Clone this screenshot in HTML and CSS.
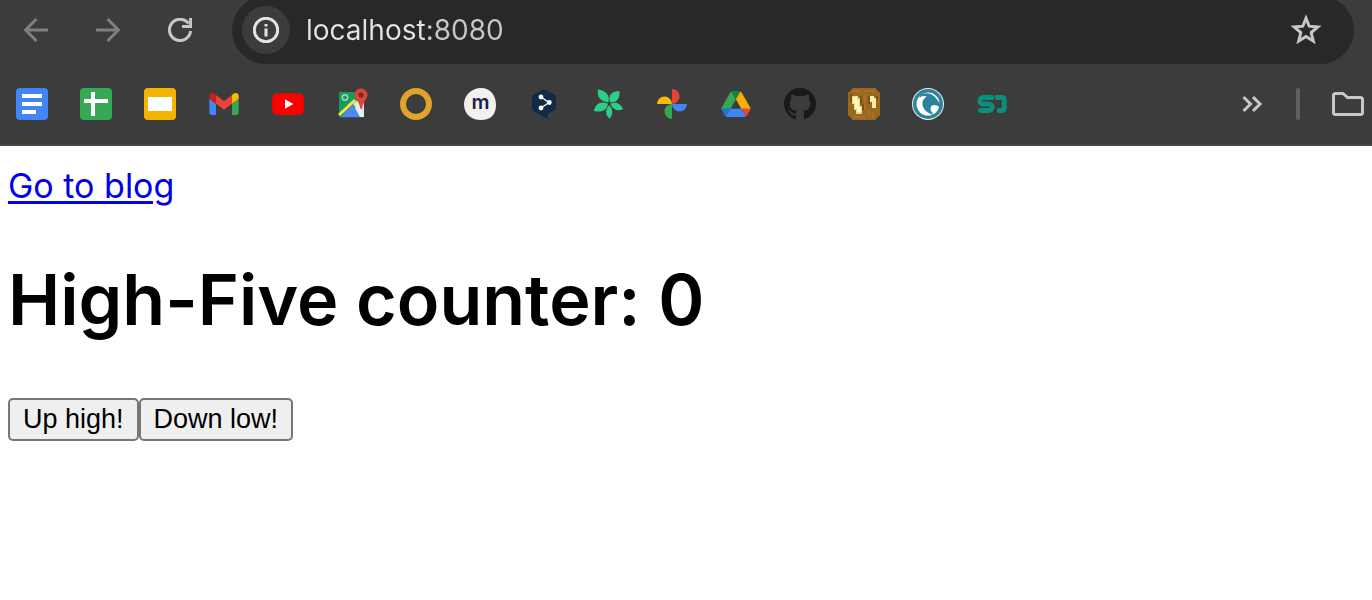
FILE: index.html
```html
<!DOCTYPE html>
<html lang="en">
  <head>
    <meta charset="UTF-8" />
    <meta name="viewport" content="width=device-width, initial-scale=1.0" />
    <title>High-Five counter</title>
    <link rel="stylesheet" href="styles.css">
  </head>
  <body>
    <header class="browser">
      <!-- Navigation and address bar -->
      <div class="toolbar">
        <button class="nav-btn" type="button" aria-label="Back" disabled>
          <svg viewBox="0 0 24 24"><path d="M24 12H2M12.500 1L1.500 12L12.500 23" /></svg>
        </button>
        <button class="nav-btn" type="button" aria-label="Forward" disabled>
          <svg viewBox="0 0 24 24"><path d="M0 12H22M11.500 1L22.500 12L11.500 23" /></svg>
        </button>
        <button class="nav-btn active" type="button" aria-label="Reload">
          <svg viewBox="0 0 24 24">
            <path d="M20.500 5.500A10.600 10.600 0 1 0 22.600 13M22.600 0V8.600H14" />
          </svg>
        </button>
        <form class="address-bar">
          <button class="info-btn" type="button" aria-label="Site information">
            <svg viewBox="0 0 26 26">
              <circle cx="13" cy="13" r="11.700" />
              <path d="M13 11.500V19.500M13 7V9.600" />
            </svg>
          </button>
          <input class="url" type="text" aria-label="Address" value="localhost:8080" />
          <button class="star-btn" type="button" aria-label="Bookmark this page">
            <svg viewBox="0 0 32 32">
              <path d="M16 4.200L19.200 12.200L27.800 12.900L21.200 18.500L23.300 27L16 22.400L8.700 27L10.800 18.500L4.200 12.900L12.800 12.200Z" />
            </svg>
          </button>
        </form>
      </div>

      <!-- Bookmarks -->
      <nav class="bookmarks">
        <a href="#" aria-label="Docs">
          <svg viewBox="0 0 32 32">
            <rect width="32" height="32" rx="4" fill="#4285f4" />
            <path d="M6 6h20v4H6zM6 14h20v4H6zM6 22h14v4H6z" fill="#fff" />
          </svg>
        </a>
        <a href="#" aria-label="Sheets">
          <svg viewBox="0 0 32 32">
            <rect width="32" height="32" rx="4" fill="#34a853" />
            <path d="M11 4h4v24h-4zM4 11h24v4H4z" fill="#fff" />
          </svg>
        </a>
        <a href="#" aria-label="Slides">
          <svg viewBox="0 0 32 32">
            <rect width="32" height="32" rx="4" fill="#f5b400" />
            <path d="M4 9h24v14H4z" fill="#fff" />
          </svg>
        </a>
        <a href="#" aria-label="Gmail">
          <svg viewBox="48 27 96 96">
            <path fill="#4285f4" d="M58 108h14V74L52 59v43c0 3.320 2.690 6 6 6" />
            <path fill="#34a853" d="M120 108h14c3.320 0 6-2.690 6-6V59l-20 15" />
            <path fill="#fbbc04" d="M120 48v26l20-15v-8c0-7.420-8.470-11.650-14.400-7.200" />
            <path fill="#ea4335" d="M72 74V48l24 18 24-18v26L96 92" />
            <path fill="#c5221f" d="M52 51v8l20 15V48l-5.600-4.200c-5.940-4.450-14.400-.220-14.400 7.200" />
          </svg>
        </a>
        <a href="#" aria-label="YouTube">
          <svg viewBox="0 0 32 32">
            <path fill="#f00" d="M5 5.400Q16 4.600 27 5.400Q31 5.700 31.500 9.500Q32.400 16 31.500 22.500Q31 26.300 27 26.700Q16 27.500 5 26.700Q1 26.300.500 22.500Q-.400 16 .500 9.500Q1 5.700 5 5.400Z" />
            <path fill="#fff" d="M13 11.200L21.400 16L13 20.800Z" />
          </svg>
        </a>
        <a href="#" aria-label="Maps">
          <svg viewBox="0 0 32 32">
            <rect x="3" y="4" width="25" height="25" rx="1" fill="#169b5d" />
            <path d="M17 16L28 6V28L22 23Z" fill="#dfe3e6" />
            <path d="M16 17L27 29H5Z" fill="#4a8af4" />
            <path d="M28 25V29H24L19 20L22 18Z" fill="#e9edf0" />
            <path d="M3 27L19 12" stroke="#ffdf4d" stroke-width="3" />
            <path d="M4 29.500H28" stroke="#40516d" stroke-width="1" />
            <circle cx="9" cy="9.500" r="2.700" fill="none" stroke="#a7dcc0" stroke-width="1.500" />
            <path d="M25 .500A6.500 6.500 0 0 1 31.500 7C31.500 11 27 13 26 21H24.500C23.500 13 18.500 11 18.500 7A6.500 6.500 0 0 1 25 .500Z" fill="#e04438" />
            <circle cx="25" cy="7" r="2.600" fill="#782c25" />
          </svg>
        </a>
        <a href="#" aria-label="Ring">
          <svg viewBox="0 0 32 32">
            <circle cx="16" cy="16" r="13" fill="none" stroke="#e0a32c" stroke-width="6" />
          </svg>
        </a>
        <a href="#" aria-label="Miro">
          <svg viewBox="0 0 32 32">
            <path d="M17 0C26 0 32 7 32 17C32 26 27 32 17 32C7 32 0 26 0 16C0 7 8 0 17 0Z" fill="#f3f1ec" />
            <text class="m-mark" x="16.500" y="21" text-anchor="middle">m</text>
          </svg>
        </a>
        <a href="#" aria-label="DeepL">
          <svg viewBox="0 0 32 32">
            <path d="M16 1L28 7.500V21.500L19.800 26V31L15 28.500L4 22V7.500Z" fill="#0f2b46" />
            <path d="M13 9L21 14.500L13 20" stroke="#fff" stroke-width="1.300" fill="none" />
            <g fill="#fff">
              <circle cx="13" cy="9" r="2.400" />
              <circle cx="21.300" cy="14.500" r="2.400" />
              <circle cx="13" cy="20" r="2.400" />
            </g>
          </svg>
        </a>
        <a href="#" aria-label="Flower">
          <svg viewBox="0 0 32 32">
            <g fill="#2fcb89">
              <path d="M16.500 14.500C8 14 4.500 8 6 1.300C14 3 18 7 16.500 14.500Z" />
              <path d="M18.200 14.500C15.500 7 20 3 27.300 3C28.500 10 25 15 18.200 14.500Z" />
              <path d="M18.500 15.800C24 13 29 16 31 21C25 24 20 21 18.500 15.800Z" />
              <path d="M17.300 17.200C21.500 22 21 27 17.500 30.700C13 27 13 21 17.300 17.200Z" />
              <path d="M16 15.800C15 23 8 25 1.700 22.700C4 15 9 12.500 16 15.800Z" />
            </g>
          </svg>
        </a>
        <a href="#" aria-label="Photos">
          <svg viewBox="0 0 32 32">
            <path fill="#ea4335" d="M16 1A7.500 7.500 0 0 1 16 16Z" />
            <path fill="#4285f4" d="M31 16A7.500 7.500 0 0 1 16 16Z" />
            <path fill="#34a853" d="M16 31A7.500 7.500 0 0 1 16 16Z" />
            <path fill="#fbbc04" d="M1 16A7.500 7.500 0 0 1 16 16Z" />
          </svg>
        </a>
        <a href="#" aria-label="Drive">
          <svg viewBox="-4 -9 96 96">
            <path fill="#1a73e8" d="M6.600 66.850l3.850 6.650c.800 1.400 1.950 2.500 3.300 3.300l13.750-23.800H0c0 1.550.400 3.100 1.200 4.500z" />
            <path fill="#34a853" d="M43.650 25L29.900 1.200c-1.350.800-2.500 1.900-3.300 3.300l-25.400 44A9.060 9.060 0 0 0 0 53h27.500z" />
            <path fill="#ea4335" d="M73.550 76.800c1.350-.800 2.500-1.900 3.300-3.300l9.250-16c.800-1.400 1.200-2.950 1.200-4.500H59.800z" />
            <path fill="#188038" d="M43.650 25L57.400 1.200C56.050.400 54.500 0 52.900 0H34.400c-1.600 0-3.150.450-4.500 1.200z" />
            <path fill="#4285f4" d="M59.800 53H27.500L13.750 76.800c1.350.800 2.900 1.200 4.500 1.200h50.800c1.600 0 3.150-.450 4.500-1.200z" />
            <path fill="#fbad04" d="M73.400 26.500l-12.700-22c-.800-1.400-1.950-2.500-3.300-3.300L43.650 25l16.150 28h27.450c0-1.550-.400-3.100-1.200-4.500z" />
          </svg>
        </a>
        <a href="#" aria-label="GitHub">
          <svg viewBox="0 0 16 16">
            <path fill="#1b1a1b" d="M8 0C3.580 0 0 3.580 0 8c0 3.540 2.290 6.530 5.470 7.590.4.070.55-.17.55-.38 0-.19-.01-.82-.01-1.490-2.010.37-2.530-.49-2.690-.94-.09-.23-.48-.94-.82-1.130-.28-.15-.68-.52-.01-.53.63-.01 1.080.58 1.230.82.72 1.210 1.870.87 2.330.66.07-.52.28-.87.51-1.070-1.780-.2-3.640-.89-3.640-3.950 0-.87.31-1.590.82-2.150-.08-.2-.36-1.020.08-2.120 0 0 .67-.21 2.200.82.64-.18 1.320-.27 2-.27s1.360.09 2 .27c1.530-1.040 2.200-.82 2.200-.82.44 1.100.16 1.920.08 2.120.51.56.82 1.270.82 2.150 0 3.070-1.870 3.750-3.650 3.950.29.25.54.73.54 1.480 0 1.070-.01 1.930-.01 2.200 0 .21.15.46.55.38A8.010 8.010 0 0 0 16 8c0-4.420-3.580-8-8-8z" />
          </svg>
        </a>
        <a href="#" aria-label="Wood">
          <svg viewBox="0 0 32 32" shape-rendering="crispEdges">
            <path d="M4 0H28V2H30V4H32V28H30V30H28V32H4V30H2V28H0V4H2V2H4Z" fill="#9a681f" />
            <path d="M4 2h8v2H4zM16 2h10v2H16zM16 6h2v16h-2zM6 28h12v2H6zM20 22h2v6h-2zM24 24h2v6h-2z" fill="#a87226" />
            <path d="M2 6h2v8H2zM12 8h2v8h-2zM14 16h2v6h-2zM20 8h2v8h-2zM28 8h2v4h-2z" fill="#7d5014" />
            <path d="M4 8H10V10H12V18H14V26H8V22H6V16H4Z" fill="#ead98a" />
            <path d="M5 9H9V12H11V19H13V24H9V21H7V15H5Z" fill="#fffbb8" />
            <path d="M22 8H26V10H28V20H24V14H22Z" fill="#f8efa5" />
          </svg>
        </a>
        <a href="#" aria-label="Bird">
          <svg viewBox="0 0 32 32">
            <circle cx="16" cy="16" r="16" fill="#e4f1f4" />
            <circle cx="16" cy="16" r="15" fill="#2b849b" />
            <circle cx="16" cy="16" r="11.500" fill="#fff" />
            <path d="M8.500 6.500C16 3 23 7 26 13C28 15 29 17 28.500 20C25 16 19 16 18.500 20C18.500 23 20 25.500 23 27C15 26 9.500 20 10.500 14C11 11.500 12.500 10 14.500 8.500C12 7.500 10 8 7 10Z" fill="#2b849b" />
          </svg>
        </a>
        <a href="#" aria-label="Speaker Deck">
          <svg viewBox="0 0 32 32">
            <path d="M16 9.500H7A3.200 3.200 0 0 0 7 16H13A3.200 3.200 0 0 1 13 22.500H4.500" fill="none" stroke="#0b8f7d" stroke-width="4.800" stroke-linecap="round" />
            <path d="M21 9.500H26Q28.200 9.500 28.200 12V20Q28.200 22.500 26 22.500H23" fill="none" stroke="#0b8f7d" stroke-width="4.800" stroke-linecap="round" />
          </svg>
        </a>
        <button class="more-btn" type="button" aria-label="More bookmarks">
          <svg viewBox="0 0 24 24"><path d="M3.500 5L10.500 12L3.500 19M13 5L20 12L13 19" /></svg>
        </button>
        <span class="divider"></span>
        <button class="folder-btn" type="button" aria-label="All bookmarks">
          <svg viewBox="0 0 32 32">
            <path d="M3.500 5.500H11L15.500 9.500H28.500Q30.500 9.500 30.500 11.500V24.500Q30.500 26.500 28.500 26.500H3.500Q1.500 26.500 1.500 24.500V7.500Q1.500 5.500 3.500 5.500Z" />
          </svg>
        </button>
      </nav>
    </header>

    <!-- Counter page -->
    <main class="page">
      <a class="blog-link" href="#">Go to blog</a>
      <h1>High-Five counter: 0</h1>
      <div class="buttons">
        <button class="five-btn" type="button">Up high!</button>
        <button class="five-btn" type="button">Down low!</button>
      </div>
    </main>
  </body>
</html>
```
FILE: styles.css
```css
* {
  box-sizing: border-box;
}
body {
  margin: 0;
  background-color: #fff;
  color: #000;
  font-family: Inter, "Noto Sans CJK JP", sans-serif;
}
svg {
  display: block;
  width: 100%;
  height: 100%;
}

/* Browser bar */
.browser {
  overflow: hidden;
  background-color: #3c3c3c;
  border-bottom: 2px solid #484747;
}
.browser button {
  flex: none;
  padding: 0;
  border: none;
  background: none;
  color: #c7c7c7;
}
.browser button path,
.browser button circle {
  fill: none;
  stroke: currentColor;
  stroke-width: 3;
}
.toolbar {
  display: flex;
  align-items: center;
  gap: 48px;
  margin-top: -4px;
  padding: 0 18px 0 24px;
}
.toolbar .nav-btn {
  width: 24px;
  height: 24px;
  color: #7f7f7f;
}
.toolbar .active {
  color: #c7c7c7;
}
.address-bar {
  display: flex;
  flex: 1;
  align-items: center;
  margin-left: -8px;
  padding: 10px 32px 10px 10px;
  border-radius: 34px;
  background-color: #282828;
}
.address-bar .info-btn {
  width: 48px;
  height: 48px;
  padding: 11px;
  border-radius: 50%;
  background-color: #3c3c3c;
  color: #e3e3e3;
}
.url {
  flex: 1;
  min-width: 0;
  padding: 0 16px;
  border: none;
  background: linear-gradient(to right, #e3e3e3 136px, #c7c7c7 136px) text;
  color: transparent;
  font: 28px/40px Inter, sans-serif;
}
.address-bar .star-btn {
  width: 32px;
  height: 32px;
}

/* Bookmarks bar */
.bookmarks {
  display: flex;
  align-items: center;
  gap: 32px;
  padding: 24px 8px 24px 16px;
}
.bookmarks a {
  flex: none;
  width: 32px;
  height: 32px;
}
.m-mark {
  fill: #1c2052;
  font: 600 20px Inter, sans-serif;
}
.bookmarks .more-btn {
  width: 24px;
  height: 24px;
  margin-left: auto;
}
.divider {
  width: 4px;
  height: 32px;
  border-radius: 2px;
  background-color: #5f5f5f;
}
.bookmarks .folder-btn {
  width: 32px;
  height: 32px;
}

/* Page content */
.page {
  padding: 16px 8px;
}
.blog-link {
  color: #0000ee;
  font-size: 34px;
  line-height: 48px;
  text-decoration-thickness: 3px;
  text-underline-offset: 3px;
}
h1 {
  margin: 40px 0 48px;
  font-size: 70px;
  font-weight: 600;
  line-height: 100px;
}
.buttons {
  display: flex;
}
.five-btn {
  padding: 0 13px;
  border: 2px solid #767676;
  border-radius: 5px;
  background-color: #efefef;
  color: #000;
  font: 27px/39px "Liberation Sans", Arial, sans-serif;
}
```
